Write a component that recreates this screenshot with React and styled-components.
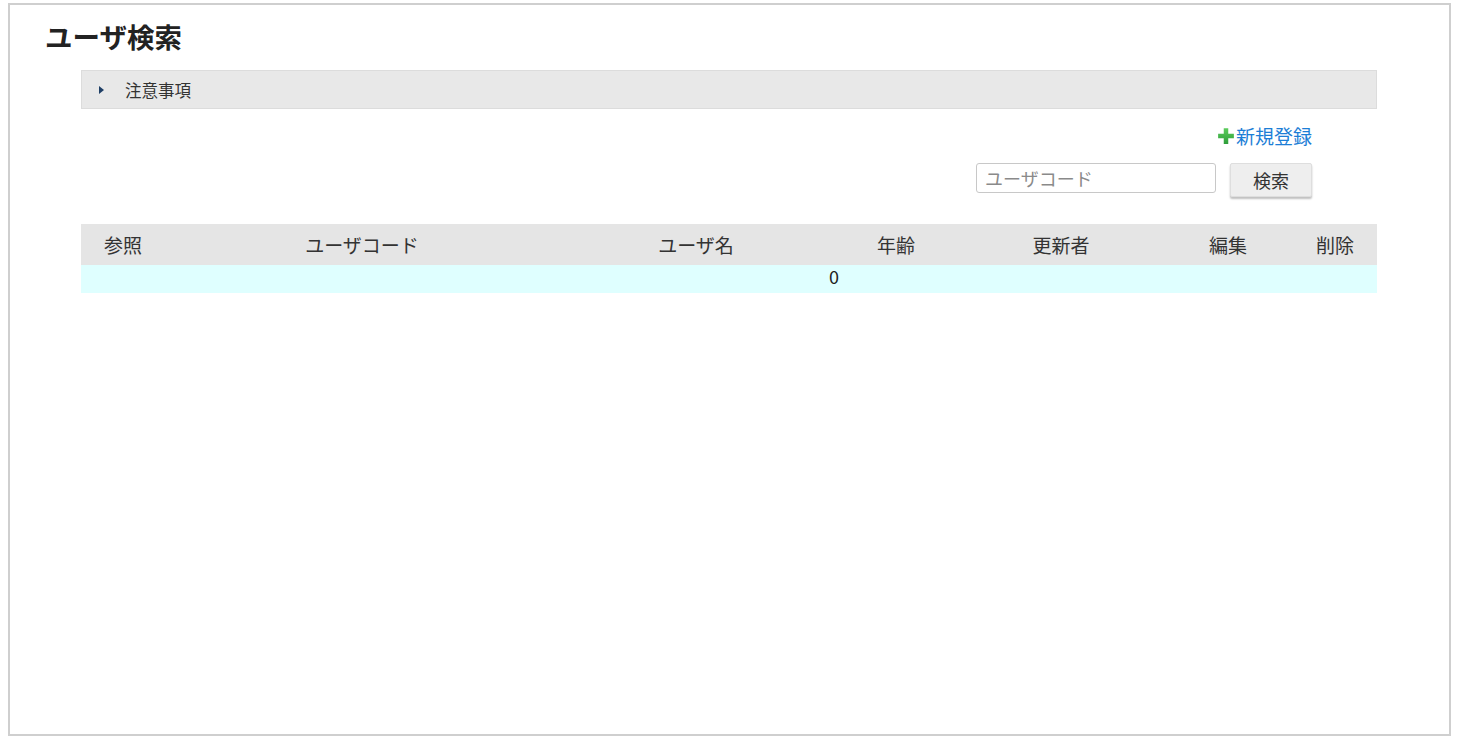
import React from "react";
import styled, { createGlobalStyle } from "styled-components";

const GlobalStyle = createGlobalStyle`
  html, body {
    margin: 0;
    padding: 0;
    background: #fff;
    font-family: "Noto Sans CJK JP", "Noto Sans", sans-serif;
    color: #333;
  }
`;

const columns = [
  { label: "参照", width: 84 },
  { label: "ユーザコード", width: 394 },
  { label: "ユーザ名", width: 274 },
  { label: "年齢", width: 126 },
  { label: "更新者", width: 204 },
  { label: "編集", width: 130 },
  { label: "削除", width: 84 },
];

const App = () => {
  return (
    <>
      <GlobalStyle />
      <Frame>
        <Title>ユーザ検索</Title>
        <Section>
          <Accordion>
            <Arrow />
            <AccordionLabel>注意事項</AccordionLabel>
          </Accordion>

          <Tools>
            <NewLink href="#">
              <PlusIcon viewBox="0 0 16 16">
                <defs>
                  <linearGradient id="plusGrad" x1="0" y1="0" x2="0" y2="1">
                    <stop offset="0" stopColor="#5ccc5c" />
                    <stop offset="1" stopColor="#2e9e3a" />
                  </linearGradient>
                </defs>
                <path d="M6 1h4v5h5v4h-5v5H6v-5H1V6h5z" fill="url(#plusGrad)" />
              </PlusIcon>
              新規登録
            </NewLink>
            <SearchRow>
              <SearchInput placeholder="ユーザコード" />
              <SearchButton>検索</SearchButton>
            </SearchRow>
          </Tools>

          <Table>
            <HeaderRow>
              {columns.map((c) => (
                <HeaderCell key={c.label} $width={c.width}>
                  {c.label}
                </HeaderCell>
              ))}
            </HeaderRow>
            <CountRow>0</CountRow>
          </Table>
        </Section>
      </Frame>
    </>
  );
};

export default App;

const Frame = styled.div`
  box-sizing: border-box;
  margin: 3px 0 0 8px;
  width: 1443px;
  height: 733px;
  border: 2px solid #cfcfcf;
  padding: 13px 0 0 0;
`;

const Title = styled.h1`
  margin: 0 0 0 35px;
  font-size: 27.5px;
  font-weight: 700;
  line-height: 36px;
  color: #222;
`;

const Section = styled.div`
  margin: 16px 0 0 71px;
  width: 1296px;
`;

const Accordion = styled.div`
  box-sizing: border-box;
  display: flex;
  align-items: center;
  height: 39px;
  background: #e8e8e8;
  border: 1px solid #dcdcdc;
  padding-left: 17px;
`;

const Arrow = styled.span`
  width: 0;
  height: 0;
  border-top: 4px solid transparent;
  border-bottom: 4px solid transparent;
  border-left: 5px solid #1f3f66;
`;

const AccordionLabel = styled.span`
  margin-left: 21px;
  font-size: 16.5px;
  color: #333;
`;

const Tools = styled.div`
  display: flex;
  flex-direction: column;
  align-items: flex-end;
  padding-right: 65px;
  margin-top: 14px;
`;

const NewLink = styled.a`
  display: flex;
  align-items: center;
  font-size: 19px;
  line-height: 26px;
  color: #1c7ed6;
  text-decoration: none;
`;

const PlusIcon = styled.svg`
  width: 18px;
  height: 18px;
  margin-right: 1px;
`;

const SearchRow = styled.div`
  display: flex;
  align-items: flex-start;
  gap: 14px;
  margin-top: 14px;
`;

const SearchInput = styled.input`
  box-sizing: border-box;
  width: 240px;
  height: 30px;
  border: 1px solid #c8c8c8;
  border-radius: 3px;
  padding: 0 8px;
  font-family: "Noto Sans CJK JP", sans-serif;
  font-size: 18px;
  color: #333;
  &::placeholder {
    color: #8a8a8a;
  }
`;

const SearchButton = styled.button`
  box-sizing: border-box;
  width: 82px;
  height: 34px;
  background: #eeeeee;
  border: 1px solid #dedede;
  border-radius: 2px;
  box-shadow: 0 2px 2px rgba(0, 0, 0, 0.25);
  font-family: "Noto Sans CJK JP", sans-serif;
  font-size: 18px;
  color: #333;
  cursor: pointer;
`;

const Table = styled.div`
  margin-top: 27px;
`;

const HeaderRow = styled.div`
  display: flex;
  height: 41px;
  background: #e5e5e5;
  align-items: center;
  padding-bottom: 1px;
  box-sizing: border-box;
`;

const HeaderCell = styled.div`
  width: ${(p) => p.$width}px;
  text-align: center;
  font-size: 19px;
  color: #333;
`;

const CountRow = styled.div`
  box-sizing: border-box;
  height: 28px;
  line-height: 23px;
  background: #dfffff;
  text-align: center;
  padding-left: 210px;
  font-size: 18px;
  color: #222;
`;
